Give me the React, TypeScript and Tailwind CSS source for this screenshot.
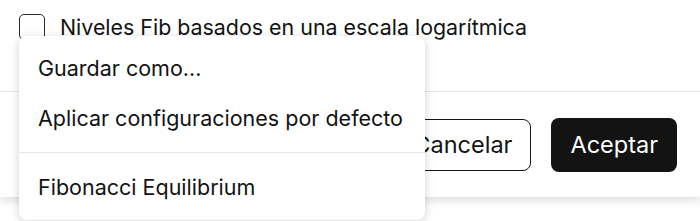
export default function App() {
  return (
    <div className="relative h-[221px] w-[700px] overflow-hidden bg-white font-['Inter',sans-serif] text-[#131313]">
      {/* Dialog */}
      <div className="flex h-[197px] flex-col bg-white shadow-[0_4px_8px_rgba(0,0,0,0.12)]">
        <div className="h-[92px] border-b border-[#e6e6e6] px-[19px] pt-[13px]">
          <label className="flex items-center gap-[15px]">
            <span className="h-[26px] w-[26px] shrink-0 rounded-[5px] border-[1.5px] border-[#2a2a2a]" />
            <span className="text-[21.4px] leading-[28px]">Niveles Fib basados en una escala logarítmica</span>
          </label>
        </div>
        <div className="flex flex-1 items-center justify-end gap-[20px] pr-[23px]">
          <button className="h-[52px] rounded-[8px] border-[1.5px] border-[#131313] px-[18px] text-[23.5px]">
            Cancelar
          </button>
          <button className="h-[54px] rounded-[8px] bg-[#131313] px-[19px] text-[23.5px] text-white">
            Aceptar
          </button>
        </div>
      </div>

      {/* Menu */}
      <div className="absolute left-[19px] top-[36px] flex h-[184px] w-[406px] flex-col rounded-[8px] bg-white pt-[7px] text-[21.5px] shadow-[0_2px_10px_rgba(0,0,0,0.18)]">
        <div className="flex h-[50px] items-center px-[19px]">Guardar como...</div>
        <div className="flex h-[50px] items-center px-[19px]">Aplicar configuraciones por defecto</div>
        <div className="my-[9px] h-px bg-[#e6e6e6]" />
        <div className="flex h-[50px] items-center px-[19px]">Fibonacci Equilibrium</div>
      </div>
    </div>
  );
}
